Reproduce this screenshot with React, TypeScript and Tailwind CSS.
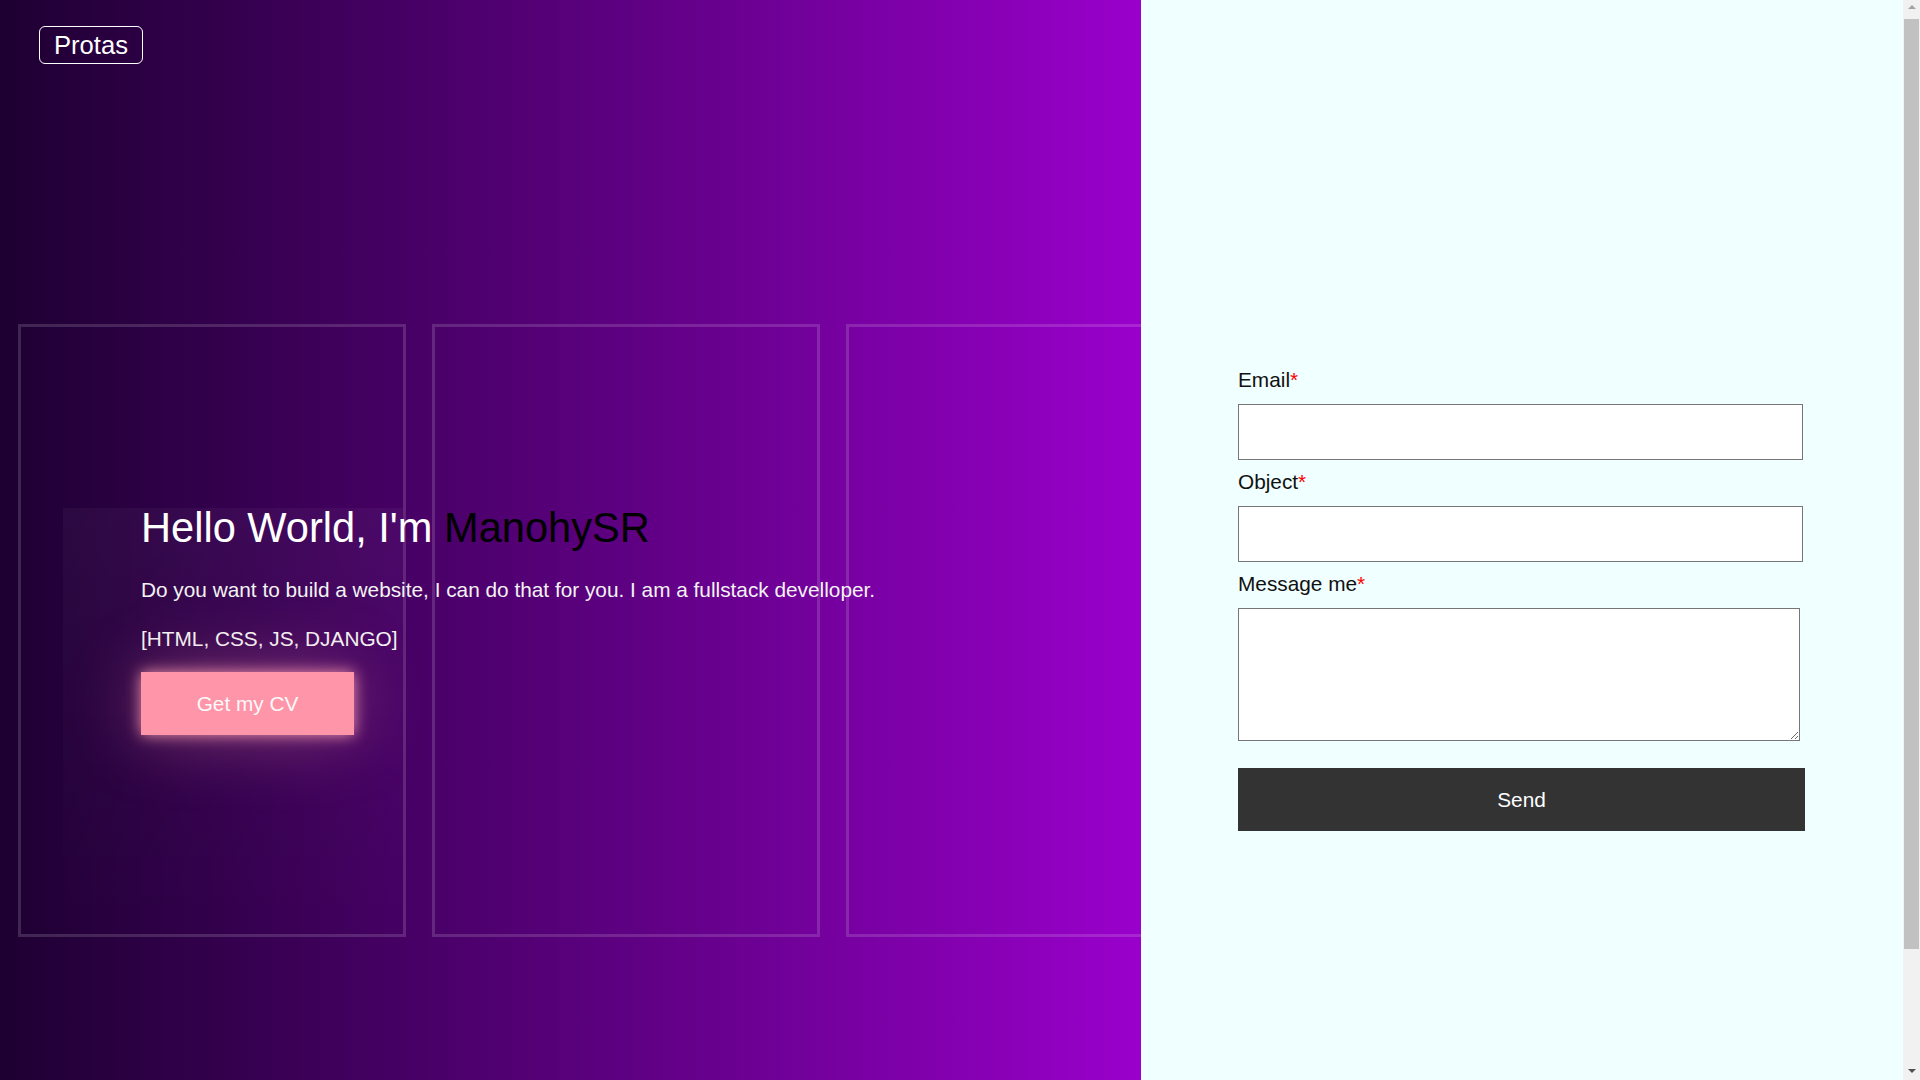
import React from 'react';

const Card = ({ children }: { children?: React.ReactNode }) => (
  <div className="relative w-[388px] h-[613px] shrink-0 border-[3px] border-white/15">{children}</div>
);

const Field = ({ label, children }: { label: string; children: React.ReactNode }) => (
  <div className="flex flex-col">
    <label className="text-[20.8px] leading-[24px] text-[#111] mb-[12px]">
      {label}
      <span className="text-[#ff0000]">*</span>
    </label>
    {children}
  </div>
);

// fake browser scrollbar, the page is a bit taller than the window
const Scrollbar = () => (
  <div className="sticky top-0 h-screen w-[17px] shrink-0 bg-[#f1f1f1] flex flex-col items-center">
    <svg width="10" height="19" viewBox="0 0 10 19" className="shrink-0">
      <path d="M1 9 L5 5 L9 9 Z" fill="#a3a3a3" />
    </svg>
    <div className="w-[15px] h-[930px] bg-[#c1c1c1]" />
    <div className="flex-1" />
    <svg width="10" height="17" viewBox="0 0 10 17" className="shrink-0">
      <path d="M1 6 L9 6 L5 10 Z" fill="#505050" />
    </svg>
  </div>
);

const App = () => {
  return (
    <div className="flex w-full font-['Liberation_Sans',Arial,sans-serif]">
      <div className="flex w-[1903px] h-[1215px] shrink-0">
        {/* Left side */}
        <section className="relative w-[1141px] h-full overflow-hidden bg-gradient-to-r from-[#1e0032] to-[#9a00cc]">
          <header className="pt-[26px] pl-[39px]">
            <a
              href="#"
              className="inline-block border border-white rounded-md px-[14px] py-[4px] text-[25.6px] leading-[28px] text-white"
            >
              Protas
            </a>
          </header>

          {/* decorative frames */}
          <div className="flex gap-[26px] pl-[18px] mt-[260px]">
            <Card>
              <div className="ml-[42px] mt-[181px] h-[420px] bg-gradient-to-b from-white/[0.035] to-white/0" />
            </Card>
            <Card />
            <Card />
          </div>

          {/* Hero */}
          <div className="absolute left-[141px] top-[505px]">
            <h1 className="text-[41.6px] leading-[46px] text-white whitespace-nowrap">
              Hello World, I'm <span className="text-black">ManohySR</span>
            </h1>
            <p className="mt-[27px] text-[20.8px] leading-[24px] text-[#f3f3f3] whitespace-nowrap">
              Do you want to build a website, I can do that for you. I am a fullstack develloper.
            </p>
            <p className="mt-[25px] text-[20.8px] leading-[24px] text-[#f3f3f3]">[HTML, CSS, JS, DJANGO]</p>
            <button className="mt-[21px] w-[213px] h-[63px] bg-[#ff95a9] text-[20.8px] text-[#fafafa] shadow-[0_0_14px_rgba(255,160,180,0.9),0_0_70px_rgba(255,149,169,0.35)]">
              Get my CV
            </button>
          </div>
        </section>

        {/* Right side */}
        <section className="w-[762px] h-full bg-[#f0ffff] pt-[368px] pl-[97px]">
          <form className="w-[567px] flex flex-col gap-[10px]">
            <Field label="Email">
              <input type="email" className="w-[565px] h-[56px] bg-white border border-[#767676]" />
            </Field>
            <Field label="Object">
              <input type="text" className="w-[565px] h-[56px] bg-white border border-[#767676]" />
            </Field>
            <Field label="Message me">
              <textarea className="w-[562px] h-[133px] bg-white border border-[#767676]" />
            </Field>
            <button
              type="button"
              className="mt-[17px] w-[567px] h-[63px] bg-[#333333] text-white text-[20.8px]"
            >
              Send
            </button>
          </form>
        </section>
      </div>
      <Scrollbar />
    </div>
  );
};

export default App;
